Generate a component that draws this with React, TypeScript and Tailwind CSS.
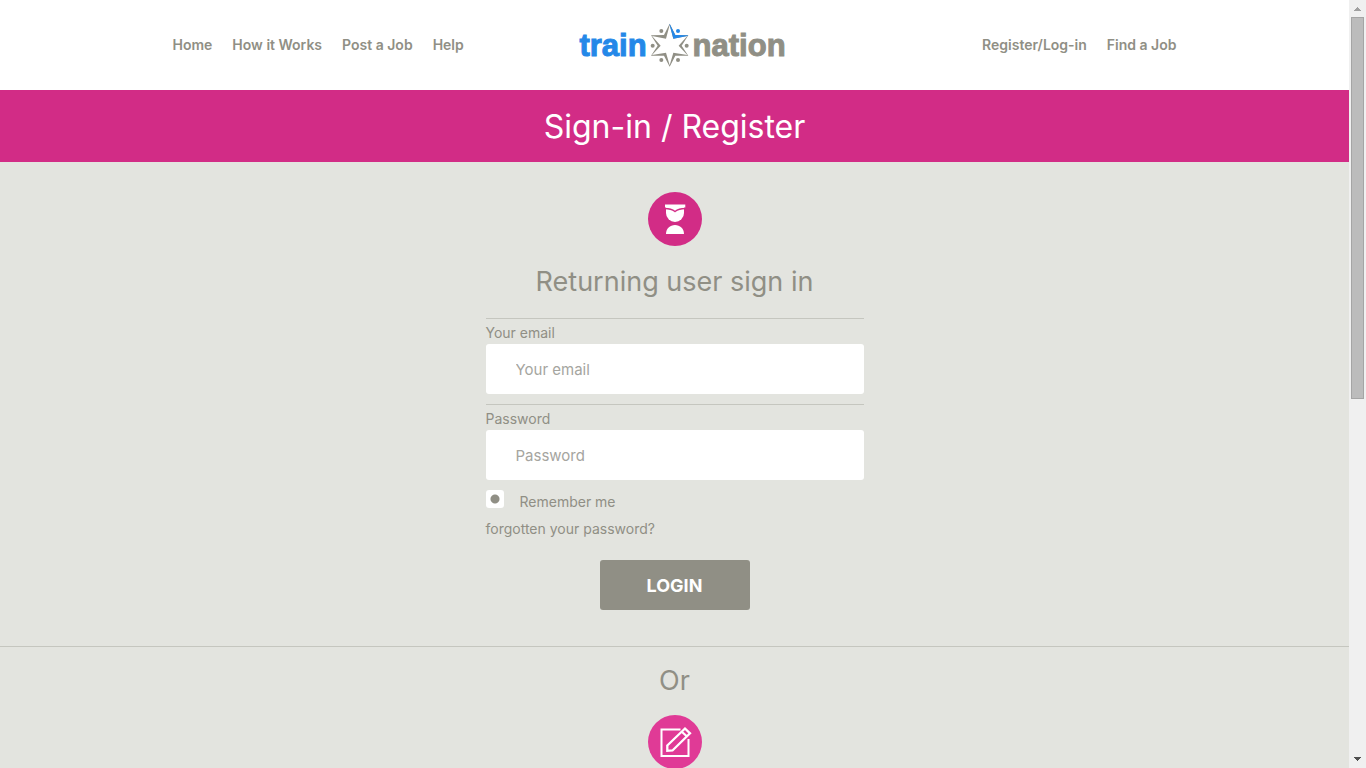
import React from 'react';

function Logo() {
  return (
    <a
      href="#home"
      aria-label="train nation"
      className="flex items-center font-['Liberation_Sans',sans-serif] text-[31px] leading-none font-bold"
    >
      <span className="text-[#2488e8] [-webkit-text-stroke:1px_#2488e8]">train</span>
      <svg viewBox="0 0 126 138" className="mx-0.5 h-[46px] w-[42px]" aria-hidden="true">
        <path
          fill="#908f85"
          fillRule="evenodd"
          d="M62 5 L79 39 L118 40 L98 71 L118 101 L79 101 L62 134 L45 101 L6 101 L26 71 L6 40 L45 39 Z M62 9 L51 50 L9 42 L35 71 L9 99 L51 92 L62 130 L73 92 L115 99 L89 71 L115 42 L73 50 Z"
        />
        <path fill="#2488e8" d="M62 5 L79 39 L118 40 L115 42 L73 50 L62 9 Z" />
        <g fill="#908f85">
          <circle cx="37" cy="27" r="6" />
          <circle cx="11" cy="71" r="6" />
          <circle cx="113" cy="71" r="6" />
          <circle cx="37" cy="114" r="6" />
          <circle cx="87" cy="114" r="6" />
        </g>
        <circle cx="87" cy="27" r="6" fill="#2488e8" />
      </svg>
      <span className="text-[#908f85] [-webkit-text-stroke:1px_#908f85]">nation</span>
    </a>
  );
}

function NavLinks({ items }: { items: string[] }) {
  return (
    <nav className="flex gap-5 text-[14px] leading-5 font-semibold whitespace-nowrap">
      {items.map((item) => (
        <a key={item} href="#nav">
          {item}
        </a>
      ))}
    </nav>
  );
}

function GraduateIcon() {
  return (
    <svg viewBox="0 0 54 54" className="h-[54px] w-[54px]" aria-hidden="true">
      <circle cx="27" cy="27" r="27" fill="#d22c86" />
      <path fill="#fff" d="M18 15H36V21A9 9 0 0 1 18 21Z" />
      <path fill="none" stroke="#d22c86" strokeWidth="1.5" d="M17 16.500Q23 16.500 27 19.500Q31 16.500 37 16.500" />
      <path fill="#fff" d="M17 12.500H37.300V15.500H17Z" />
      <path fill="#fff" d="M18 42C18 36.500 22 33 27 33C32 33 36 36.500 36 42Z" />
    </svg>
  );
}

function EditIcon() {
  return (
    <svg viewBox="0 0 54 54" className="h-[54px] w-[54px]" fill="none" stroke="#fff" strokeWidth="2" aria-hidden="true">
      <circle cx="27" cy="27" r="27" fill="#e03a96" stroke="none" />
      <path d="M32.500 14.500H13.500V41H40.500V24" />
      <path strokeWidth="2.3" d="M19.300 30.500L37 13.500L42 18.300L24.500 35.500L19.300 35.800Z" />
      <path strokeWidth="2.300" d="M33.500 16.500L39 21.500" />
    </svg>
  );
}

function Field({ id, label, type }: { id: string; label: string; type: string }) {
  return (
    <div className="border-t border-[#c5c6bf] pt-[3px] pb-2.5">
      <label htmlFor={id} className="block text-[14px] leading-[22px]">
        {label}
      </label>
      <input
        id={id}
        type={type}
        placeholder={label}
        className="block h-[50px] w-full rounded-[3px] bg-white px-[30px] text-[15px] outline-none placeholder:text-[#a5a5a0]"
      />
    </div>
  );
}

function ScrollRail() {
  return (
    <div aria-hidden="true" className="flex w-[17px] shrink-0 flex-col items-center bg-[#f0f0f0]">
      <svg viewBox="0 0 17 17" className="h-[17px] w-full" fill="#a0a0a0">
        <path d="M8 7H9V8H10V9H11V10H12V11H5V10H6V9H7V8H8Z" />
      </svg>
      <div className="h-[382px] w-[13px] border border-[#a5a5a5] bg-[#bcbcbc]" />
      <svg viewBox="0 0 17 17" className="mt-auto h-[17px] w-full" fill="#505050">
        <path d="M5 6H12V7H11V8H10V9H9V10H8V9H7V8H6V7H5Z" />
      </svg>
    </div>
  );
}

export default function App() {
  return (
    <div className="flex h-screen overflow-hidden bg-[#e3e4df] font-[Inter,sans-serif] text-[#908f85]">
      <div className="min-w-0 flex-1 overflow-hidden">
        <header className="bg-white px-6">
          <div className="mx-auto grid h-[90px] max-w-[1004px] grid-cols-[1fr_auto_1fr] items-center">
            <NavLinks items={['Home', 'How it Works', 'Post a Job', 'Help']} />
            <div className="pl-4">
              <Logo />
            </div>
            <div className="flex justify-end">
              <NavLinks items={['Register/Log-in', 'Find a Job']} />
            </div>
          </div>
        </header>

        <h1 className="bg-[#d22c86] pt-[17px] pb-[15px] text-center text-[32px] leading-10 text-white">
          Sign-in / Register
        </h1>

        <main>
          <section className="flex flex-col items-center border-b border-[#c5c6bf] px-6 pt-[30px] pb-9">
            <GraduateIcon />
            <h2 className="my-5 text-[27px] leading-8">Returning user sign in</h2>
            <form className="w-full max-w-[378px]" onSubmit={(e) => e.preventDefault()}>
              <Field id="email" label="Your email" type="email" />
              <Field id="password" label="Password" type="password" />
              <div className="flex items-start gap-4 text-[14px] leading-6">
                <input
                  id="remember"
                  type="checkbox"
                  className="h-[18px] w-[18px] appearance-none rounded-[3px] bg-white bg-[radial-gradient(circle,#908f85_4px,transparent_5px)]"
                />
                <label htmlFor="remember">Remember me</label>
              </div>
              <a href="#forgotten" className="mt-[3px] block w-fit text-[14px] leading-6">
                forgotten your password?
              </a>
              <button
                type="submit"
                className="mx-auto mt-[19px] block h-[50px] w-[150px] rounded-[3px] bg-[#908f85] text-[18px] font-bold text-white"
              >
                LOGIN
              </button>
            </form>
          </section>

          <section className="flex flex-col items-center px-6 pt-[18px]">
            <h2 className="mb-[18px] text-[27px] leading-8">Or</h2>
            <EditIcon />
          </section>
        </main>
      </div>
      <ScrollRail />
    </div>
  );
}
